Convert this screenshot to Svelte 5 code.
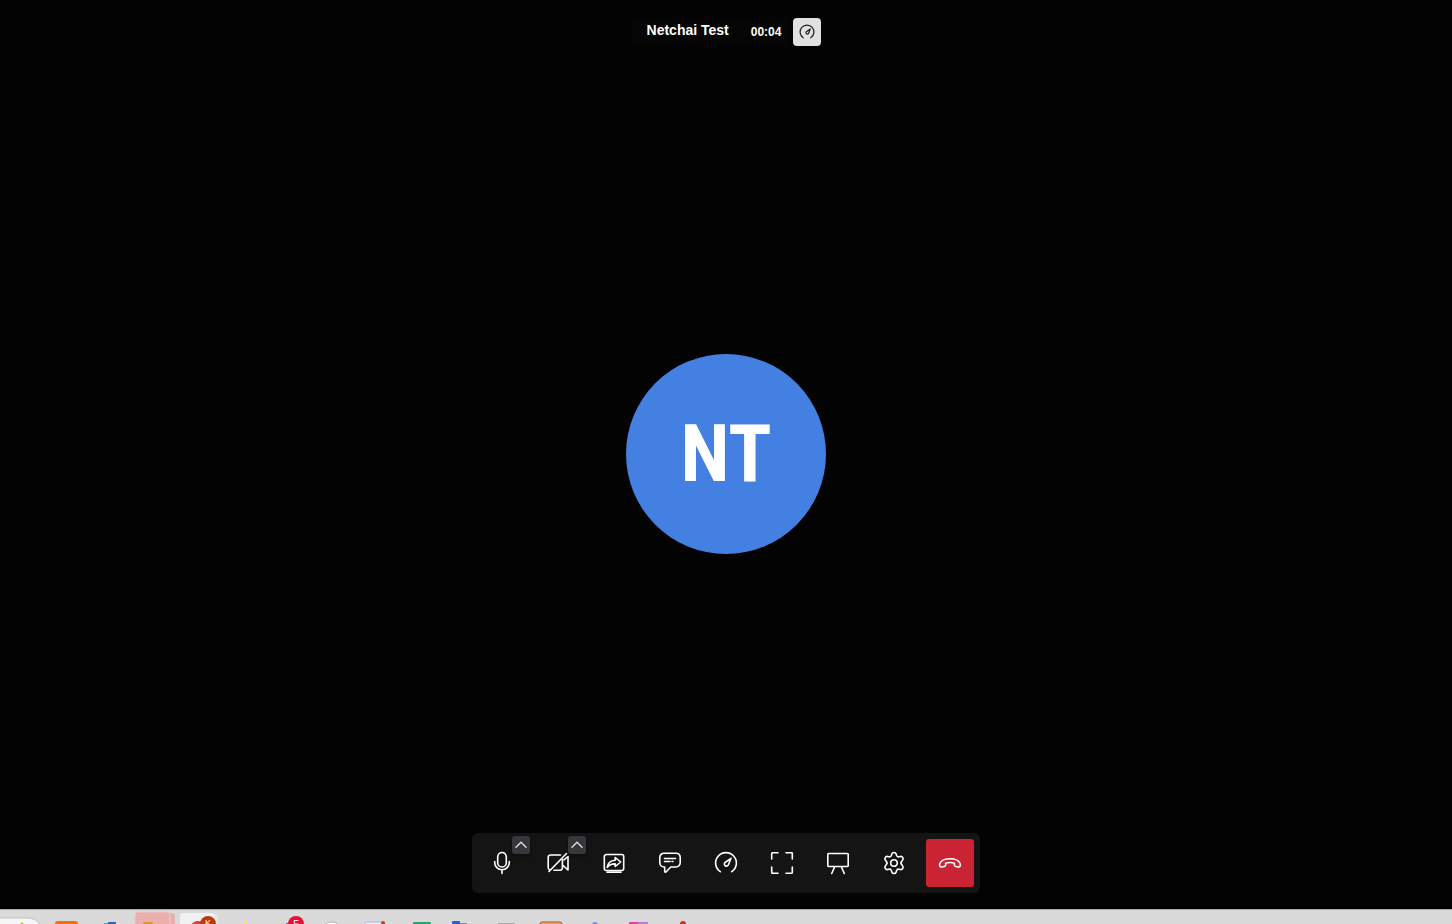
<script>
	let { name = 'Netchai Test', initials = 'NT', elapsed = '00:04' } = $props();

	const controls = [
		{ id: 'mic', label: 'Mute microphone', menu: 'Microphone options' },
		{ id: 'camera', label: 'Start camera', menu: 'Camera options' },
		{ id: 'share', label: 'Share screen' },
		{ id: 'chat', label: 'Chat' },
		{ id: 'gauge', label: 'Call quality' },
		{ id: 'fullscreen', label: 'Full screen' },
		{ id: 'board', label: 'Whiteboard' },
		{ id: 'settings', label: 'Settings' },
		{ id: 'hangup', label: 'Hang up' }
	];

	const paths = {
		mic: 'M12 1.5a4.3 4.3 0 0 1 4.3 4.3v5.9a4.3 4.3 0 0 1-8.6 0V5.8A4.3 4.3 0 0 1 12 1.5z M4.7 10.5v1a7.3 7.3 0 0 0 14.6 0v-1 M12 18.8v3.7',
		camera:
			'M14.5 4H4.5a2.3 2.3 0 0 0-2.3 2.3v10.4a2.3 2.3 0 0 0 1.2 2 M8 19.2h6.2a2.2 2.2 0 0 0 2.2-2.2V8.5 M16.5 14l5.5 5V5.5l-4 3.3 M3 20.5L20.5 2.5',
		share:
			'M4.3 3.5h15.4a2 2 0 0 1 2 2v12a2 2 0 0 1-2 2H4.3a2 2 0 0 1-2-2v-12a2 2 0 0 1 2-2z M5 21.3h14 M13.2 6.5l5.5 4.5-5.5 4.5v-2.6c-3.6-.1-6 1-8 3.4.6-4.2 3.2-6.8 8-7.1z',
		chat: 'M6 2.2h12a4.2 4.2 0 0 1 4.2 4.2v5.4A4.2 4.2 0 0 1 18 16h-5.2l-4.6 4.8c-.7.7-1.5.4-1.5-.5V16H6a4.2 4.2 0 0 1-4.2-4.2V6.4A4.2 4.2 0 0 1 6 2.2z M6.5 7.5h11 M6.5 10.5h5.5 M14 10.5h1',
		gauge: 'M6.3 20.7a10.4 10.4 0 1 1 11.4 0 M17 7.3l-2.6 6.5a2.1 2.1 0 1 1-3.4-2.3z',
		fullscreen:
			'M8 1.7H2.5a.8.8 0 0 0-.8.8V8 M16 1.7h5.5a.8.8 0 0 1 .8.8V8 M8 22.3H2.5a.8.8 0 0 1-.8-.8V16 M16 22.3h5.5a.8.8 0 0 0 .8-.8V16',
		board: 'M2.5 2.5h19a.7.7 0 0 1 .7.7v11.6a.7.7 0 0 1-.7.7h-19a.7.7 0 0 1-.7-.7V3.2a.7.7 0 0 1 .7-.7z M8.8 15.5l-3.1 7 M15.2 15.5l3.1 7',
		settings:
			'M9.8 3.1c.7-2.2 3.7-2.2 4.4 0l.4 1.3a2 2 0 0 0 2.4 1.4l1.3-.3c2.2-.5 3.7 2.1 2.2 3.8l-.9 1.3a2 2 0 0 0 0 2.8l.9 1.3c1.5 1.7 0 4.300-2.200 3.800l-1.300-.3a2 2 0 0 0-2.400 1.400l-.4 1.300c-.7 2.200-3.700 2.200-4.400 0l-.4-1.300A2 2 0 0 0 7 18.200l-1.300.3c-2.200.5-3.700-2.100-2.200-3.800l.9-1.300a2 2 0 0 0 0-2.800l-.9-1.300C2 7.600 3.500 5 5.700 5.500l1.300.3a2 2 0 0 0 2.400-1.400z M12 8.700a3.300 3.300 0 1 1 0 6.600 3.300 3.300 0 0 1 0-6.600z',
		hangup:
			'M1.8 12.7C3 9.5 7.2 7.7 12 7.7s9 1.8 10.2 5c.6 1.7-.1 3.6-2 3.3l-2.5-.5c-1-.2-1.5-.9-1.4-1.9l.1-1.3c-2.7-1-6.1-1-8.8 0l.1 1.3c.1 1-.4 1.7-1.4 1.9l-2.5.5c-1.9.3-2.6-1.6-2-3.3z'
	};

	// Running apps in the dock, each one drawn in a 44 x 15 slot.
	const apps = [
		{ label: 'Launcher', shapes: [{ x: 10, y: 12, w: 23, h: 8, r: 3, fill: '#f96b0b' }] },
		{
			label: 'Editor',
			shapes: [
				{ x: 15, y: 14, w: 9, h: 3, r: 0, fill: '#3ba9e8' },
				{ x: 19, y: 13, w: 8, h: 3, r: 1, fill: '#2765b8' }
			]
		},
		{
			label: 'Files',
			shapes: [
				{ x: 34, y: 4, w: 8, h: 20, r: 3, fill: '#e7b0ae' },
				{ x: 2, y: 3, w: 35, h: 20, r: 3, fill: '#ebb0ae', edge: '#efc8c6' },
				{ x: 10, y: 13, w: 10, h: 8, r: 2, fill: '#dc9a20' }
			]
		},
		{
			label: 'Browser',
			shapes: [
				{ x: 6, y: 5, w: 35, h: 20, r: 3, fill: '#e6e6e6' },
				{ x: 3, y: 4, w: 35, h: 20, r: 3, fill: '#f1f1f1' },
				{ x: 13, y: 12, w: 16, h: 16, r: 8, fill: '#dc3f35' }
			],
			badge: 'K',
			tone: 'brown'
		},
		{ label: 'Notes', shapes: [{ x: 23, y: 12, w: 4, h: 6, r: 2, fill: '#f2e85c' }] },
		{ label: 'Messages', shapes: [{ x: 21, y: 14, w: 8, h: 3, r: 0, fill: '#5a62c8' }], badge: 'F', tone: 'red' },
		{ label: 'Clock', shapes: [{ x: 15, y: 13, w: 15, h: 12, r: 6, fill: '#fafafa', edge: '#b4b4b4' }] },
		{
			label: 'Snipping tool',
			shapes: [
				{ x: 12, y: 13, w: 20, h: 4, r: 1, fill: '#ececff', edge: '#b6b6dc' },
				{ x: 28, y: 12, w: 4, h: 4, r: 2, fill: '#bd4330' }
			]
		},
		{ label: 'Sheets', shapes: [{ x: 16, y: 13, w: 18, h: 4, r: 1, fill: '#2fa36f' }] },
		{
			label: 'Remote desktop',
			shapes: [
				{ x: 16, y: 14, w: 10, h: 3, r: 0, fill: '#888888' },
				{ x: 11, y: 12, w: 8, h: 5, r: 1, fill: '#1c64d8' }
			]
		},
		{ label: 'Printer', shapes: [{ x: 13, y: 14, w: 17, h: 3, r: 0, fill: '#ababab' }] },
		{ label: 'Archive', shapes: [{ x: 11, y: 13, w: 22, h: 8, r: 2, fill: '#f0a36e', edge: '#a55a20' }] },
		{ label: 'Teams', shapes: [{ x: 19, y: 13, w: 6, h: 6, r: 3, fill: '#8187dc' }] },
		{
			label: 'Designer',
			shapes: [
				{ x: 19, y: 13, w: 12, h: 4, r: 1, fill: '#b978dc' },
				{ x: 12, y: 13, w: 9, h: 4, r: 1, fill: '#e53f9d' }
			]
		},
		{ label: 'Reader', shapes: [{ x: 19, y: 12, w: 6, h: 6, r: 3, fill: '#cc302c' }] }
	];
</script>

{#snippet icon(id)}
	<svg class="icon" viewBox="0 0 24 24" aria-hidden="true">
		<path d={paths[id]} />
	</svg>
{/snippet}

<div class="screen">
	<main class="call">
		<header class="call-header">
			<div class="call-info">
				<h1>{name}</h1>
				<time>{elapsed}</time>
			</div>
			<button class="quality" type="button" aria-label="Connection quality">
				{@render icon('gauge')}
			</button>
		</header>

		<div class="avatar">{initials}</div>

		<div class="toolbar" role="toolbar" aria-label="Call controls">
			{#each controls as control}
				<div class="control">
					<button class="tool" class:hangup={control.id === 'hangup'} type="button" aria-label={control.label}>
						{@render icon(control.id)}
					</button>
					{#if control.menu}
						<button class="more" type="button" aria-label={control.menu}>
							<svg viewBox="0 0 18 18" aria-hidden="true">
								<path d="M3.5 11.8L9 6.2l5.500 5.600" />
							</svg>
						</button>
					{/if}
				</div>
			{/each}
		</div>
	</main>

	<nav class="dock" aria-label="Running apps">
		<button class="search" type="button" aria-label="Search">
			<svg viewBox="0 0 45 15" aria-hidden="true">
				<path d="M-1 9h28c7 0 11 3 14 8H-1z" fill="#f6f6f4" stroke="#c2c2c2" />
				<circle cx="22" cy="15" r="1.5" fill="#b5bd45" />
			</svg>
		</button>
		{#each apps as app}
			<button class="app" type="button" aria-label={app.label}>
				<svg viewBox="0 0 44 15" aria-hidden="true">
					{#each app.shapes as s}
						<rect x={s.x} y={s.y} width={s.w} height={s.h} rx={s.r} fill={s.fill} stroke={s.edge ?? 'none'} />
					{/each}
				</svg>
				{#if app.badge}
					<span class="badge {app.tone}">{app.badge}</span>
				{/if}
			</button>
		{/each}
	</nav>
</div>

<style>
	:global(body) {
		margin: 0;
		background: #030303;
	}

	.screen {
		display: flex;
		flex-direction: column;
		height: 100vh;
		overflow: hidden;
		font-family: 'Liberation Sans', Arial, sans-serif;
		color: #fff;
	}

	button {
		margin: 0;
		padding: 0;
		border: 0;
		background: none;
		color: inherit;
		font: inherit;
		cursor: pointer;
	}

	svg {
		display: block;
	}

	.call {
		flex: 1;
		display: grid;
		grid-template-rows: 1fr auto 1fr;
		justify-items: center;
		box-sizing: border-box;
		padding: 15px 16px 16px;
		background: #030303;
	}

	.call-header {
		align-self: start;
		display: flex;
		gap: 4px;
		padding-top: 3px;
	}

	.call-info {
		display: flex;
		align-items: center;
		gap: 22px;
		height: 28px;
		padding: 0 8px 0 16px;
		border-radius: 4px;
		background: #050505;
	}

	h1 {
		margin: 0;
		padding-bottom: 4px;
		font-size: 14px;
		line-height: 20px;
		font-weight: 700;
	}

	time {
		font-size: 12px;
		line-height: 16px;
		font-weight: 700;
	}

	.quality {
		display: grid;
		place-items: center;
		width: 28px;
		height: 28px;
		border-radius: 4px;
		background: #e1e1e1;
		color: #1c1c1c;
	}

	.icon {
		width: 24px;
		height: 24px;
		fill: none;
		stroke: currentColor;
		stroke-width: 1.6;
		stroke-linecap: round;
		stroke-linejoin: round;
	}

	.quality .icon {
		width: 16px;
		height: 16px;
		stroke-width: 1.8;
	}

	.avatar {
		display: grid;
		place-items: center;
		width: 200px;
		height: 200px;
		border-radius: 50%;
		background: #4480e2;
		font-family: 'Arial Narrow', 'Roboto Condensed', 'Liberation Sans', sans-serif;
		font-size: 80px;
		line-height: 92px;
		font-weight: 700;
	}

	.toolbar {
		align-self: end;
		display: flex;
		gap: 8px;
		padding: 6px;
		border-radius: 6px;
		background: #141414;
	}

	.control {
		position: relative;
	}

	.tool {
		display: grid;
		place-items: center;
		width: 48px;
		height: 48px;
		border-radius: 3px;
	}

	.hangup {
		background: #c92334;
	}

	.more {
		position: absolute;
		top: -3px;
		right: -4px;
		width: 18px;
		height: 18px;
		border-radius: 3px;
		background: #37373c;
		box-shadow: 0 1px 3px rgba(0, 0, 0, 0.5);
	}

	.more path {
		fill: none;
		stroke: #e0e0e0;
		stroke-width: 1.3;
	}

	.dock {
		display: flex;
		box-sizing: border-box;
		height: 15px;
		overflow: hidden;
		background: #dadada;
		box-shadow: inset 0 1px #a9a9a9;
	}

	.search {
		flex: none;
		width: 45px;
	}

	.app {
		position: relative;
		flex: none;
		width: 44px;
	}

	.badge {
		position: absolute;
		top: 7px;
		left: 23px;
		width: 16px;
		height: 16px;
		border-radius: 50%;
		font-size: 9px;
		line-height: 14px;
		text-align: center;
	}

	.brown {
		background: #bb3911;
	}

	.red {
		background: #ea0d3c;
	}
</style>
